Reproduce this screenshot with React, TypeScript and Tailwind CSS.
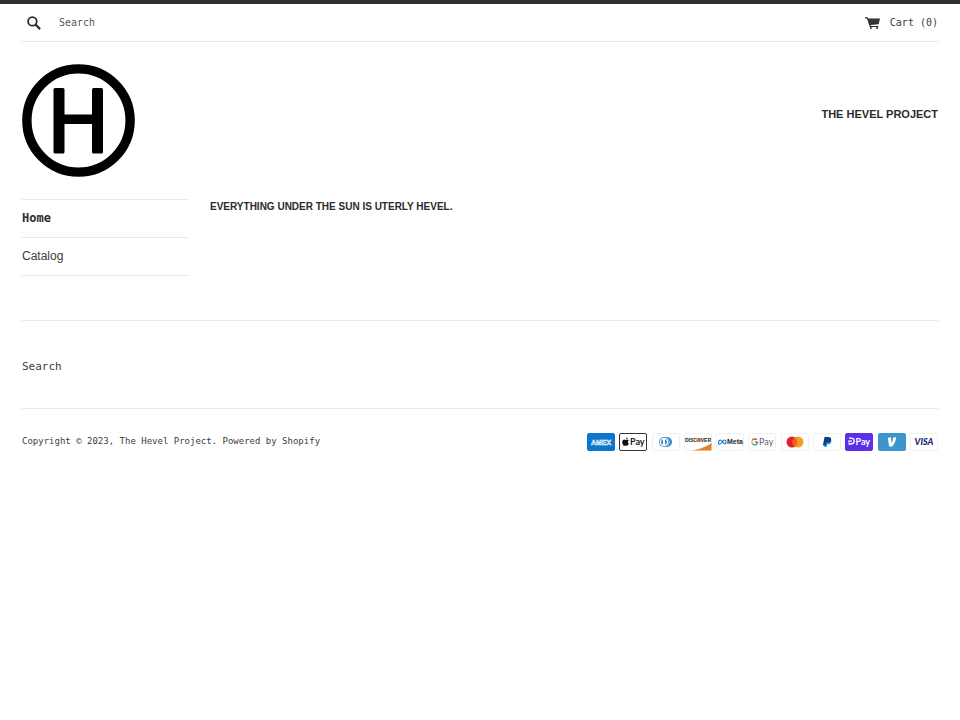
import type { ReactNode } from "react";

const PayCard = ({ name, fill = "#fff", stroke = "#f1f1f1", children }: { name: string; fill?: string; stroke?: string; children: ReactNode }) => (
    <li>
        <svg role="img" aria-label={name} viewBox="0 0 28 18" className="h-[18px] w-7">
            <rect x="0.5" y="0.5" width="27" height="17" rx="1.5" fill={fill} stroke={stroke} />
            {children}
        </svg>
    </li>
);

const payText = "font-['Liberation_Sans',sans-serif]";
const payTextRound = "font-[Lato,sans-serif]";

function PaymentIcons() {
    return (
        <ul className="flex w-[351px] justify-between" aria-label="Payment methods">
            <PayCard name="American Express" fill="#0b76cb" stroke="#0b76cb">
                <text x="14" y="11.5" textAnchor="middle" fontSize="7" fontWeight="bold" fill="#3f97dc" stroke="#fff" strokeWidth="0.5" className={payText}>AMEX</text>
            </PayCard>
            <PayCard name="Apple Pay" stroke="#333">
                <path d="M8.6 4.200c.1 1-.7 1.900-1.600 1.900-.1-.9.7-1.800 1.600-1.900zM9.700 10.700c-.4 1-1 2-1.700 2-.6 0-.8-.3-1.400-.3s-.9.300-1.400.300C4.200 12.700 3.200 10.700 3.200 9.200c0-1.800 1-2.700 2-2.700.7 0 1.100.4 1.600.4.500 0 1-.4 1.800-.4.500 0 1 .3 1.300.7-1.300.8-1.200 2.800-.2 3.500z" fill="#111" />
                <text x="11" y="12" fontSize="9" fontWeight="bold" fill="#222" className={payTextRound}>Pay</text>
            </PayCard>
            <PayCard name="Diners Club">
                <path d="M12.500 4H15a5 5 0 0 1 0 10h-2.500a5 5 0 0 0 0-10z" fill="#3086c8" />
                <path d="M12 4a5 5 0 0 0 0 10 5 5 0 0 0 0-10z" fill="#3086c8" />
                <circle cx="12" cy="9" r="4.300" fill="#fff" />
                <path d="M11 6.200v5.600a3 3 0 0 1 0-5.600zM13 6.200v5.600a3 3 0 0 0 0-5.600z" fill="#3086c8" />
            </PayCard>
            <PayCard name="Discover">
                <path d="M27.500 10v7.500H8c8-1.500 15-4 19.500-7.500z" fill="#e8802a" />
                <text x="14" y="9" textAnchor="middle" fontSize="5" fontWeight="bold" fill="#222" className={payText}>DISCOVER</text>
                <circle cx="14.500" cy="7.200" r="2" fill="#e8702a" />
            </PayCard>
            <PayCard name="Meta Pay">
                <path d="M2.500 10.500c0-2 .8-3.500 1.900-3.500 2 0 2.600 4 4.400 4 .9 0 1.200-.7 1.200-1.700C10 8 9.500 7 8.600 7 6.800 7 5.700 11.200 3.800 11.200c-.8 0-1.300-.3-1.300-.7z" fill="none" stroke="#1877cc" strokeWidth="1.100" />
                <text x="11" y="11.200" fontSize="7" fontWeight="bold" fill="#1c2b33" className={payText}>Meta</text>
            </PayCard>
            <PayCard name="Google Pay">
                <g fill="none" strokeWidth="1.400">
                    <path d="M8.900 6.900A2.900 2.900 0 0 0 4.300 7.500" stroke="#ea4335" />
                    <path d="M4.300 7.500a2.900 2.900 0 0 0 0 3" stroke="#fbbc04" />
                    <path d="M4.300 10.500a2.900 2.900 0 0 0 4.400.7" stroke="#34a853" />
                    <path d="M8.700 11.200A2.900 2.900 0 0 0 9.600 9.200H6.900" stroke="#4285f4" />
                </g>
                <text x="11" y="12" fontSize="9" fill="#5f6368" className={payTextRound}>Pay</text>
            </PayCard>
            <PayCard name="Mastercard">
                <circle cx="11" cy="9" r="5.500" fill="#e0202a" />
                <circle cx="17" cy="9" r="5.500" fill="#f59e1f" />
                <path d="M14 4.400a5.500 5.500 0 0 1 0 9.200 5.500 5.500 0 0 1 0-9.200z" fill="#f26122" />
            </PayCard>
            <PayCard name="PayPal">
                <path d="M12.500 6h4.500c1.300.6 1.700 1.800 1.200 3.200-.5 1.500-1.700 2-3.200 2h-.8l-.6 2.800h-2.500z" fill="#179bd7" />
                <path d="M11.500 4h4c2 0 3 1 2.600 2.900-.4 2-1.800 2.700-3.600 2.700h-1.200l-.6 3H9.900z" fill="#183b80" />
            </PayCard>
            <PayCard name="Shop Pay" fill="#5a31e8" stroke="#5a31e8">
                <path d="M3 8.200h4M4 5.200h2c2 0 3.200 1.200 3.200 2.900S8 11 6 11H4.200V9.500" fill="none" stroke="#fff" strokeWidth="1.300" />
                <text x="10.500" y="11.500" fontSize="9" fontWeight="bold" fill="#fff" className={payTextRound}>Pay</text>
            </PayCard>
            <PayCard name="Venmo" fill="#3d95ce" stroke="#3d95ce">
                <path d="M9.800 4.700l3-.4.800 5.600c.9-1.500 1.500-3.200 1.200-5.200l3-.6c.7 3-1.200 6.400-3.400 9.400h-3.300z" fill="#fff" />
            </PayCard>
            <PayCard name="Visa">
                <text x="14" y="12" textAnchor="middle" fontSize="9" fontWeight="900" fontStyle="italic" fill="#1a1f71" className={payTextRound}>VISA</text>
            </PayCard>
        </ul>
    );
}

export default function App() {
    return (
        <div className="min-h-screen border-t-4 border-[#2f2f2f] bg-white px-[22px] font-['DejaVu_Sans_Mono',monospace] text-[#3c3c3c]">
            <header>
                <div className="flex h-[38px] items-center justify-between border-b border-[#e8e8e8]">
                    <form className="flex items-center" role="search" onSubmit={(e) => e.preventDefault()}>
                        <button type="submit" aria-label="Search" className="flex h-8 w-[37px] items-center pl-[5px]">
                            <svg viewBox="0 0 14 14" className="size-[14px]" fill="none" stroke="#2b2b2b">
                                <circle cx="5.400" cy="5.400" r="4.300" strokeWidth="1.800" />
                                <path d="M8.500 8.500l4.600 4.600" strokeWidth="2.200" />
                            </svg>
                        </button>
                        <input
                            type="search"
                            aria-label="Search our store"
                            placeholder="Search"
                            className="w-40 pb-px text-[10px] outline-none placeholder:text-[#555]"
                        />
                    </form>
                    <a href="#cart" className="flex items-center gap-[10px] text-[10px]">
                        <svg viewBox="0 0 15 12" className="h-3 w-[15px]" fill="#2b2b2b">
                            <path d="M0 .3h2.700l.5 1.200H15l-1.300 5.700-8.300.9.300.8h7.700v1.100H4.800L2 1.400H0z" />
                            <path d="M4.200 3.300h10M4.900 5.200h9" stroke="#777" strokeWidth="0.300" />
                            <circle cx="5.900" cy="11" r="1" />
                            <circle cx="12" cy="11" r="1" />
                        </svg>
                        Cart (0)
                    </a>
                </div>
                <div className="flex items-center justify-between pt-[22px]">
                    <a href="#home" aria-label="The Hevel Project">
                        <svg viewBox="0 0 113 113" className="size-[113px]">
                            <circle cx="56.500" cy="56.500" r="51.600" fill="none" stroke="#000" strokeWidth="9.400" />
                            <g fill="#000">
                                <rect x="31.500" y="24" width="11" height="65.500" rx="1.500" />
                                <rect x="70" y="24" width="11" height="65.500" rx="1.500" />
                                <rect x="40" y="50.500" width="32" height="9.500" />
                            </g>
                        </svg>
                    </a>
                    <p className="pb-3 font-['Liberation_Sans',sans-serif] text-[11px] font-bold text-[#2b2b2b]">THE HEVEL PROJECT</p>
                </div>
            </header>

            <div className="flex gap-[22px] pt-[22px]">
                <nav className="w-[166px] shrink-0">
                    <ul className="border-t border-[#e8e8e8] text-xs leading-[17px]">
                        <li className="border-b border-[#e8e8e8]">
                            <a href="#home" className="block py-[10px] font-bold text-[#2b2b2b]">Home</a>
                        </li>
                        <li className="border-b border-[#e8e8e8] font-['Liberation_Sans',sans-serif]">
                            <a href="#catalog" className="block py-[10px]">Catalog</a>
                        </li>
                    </ul>
                </nav>
                <main className="min-w-0 flex-1">
                    <h1 className="font-['Liberation_Sans',sans-serif] text-[10px] leading-4 font-bold text-[#2b2b2b]">
                        EVERYTHING UNDER THE SUN IS UTERLY HEVEL.
                    </h1>
                </main>
            </div>

            <footer className="mt-11 border-t border-[#e8e8e8]">
                <div className="pt-[38px] pb-[33px] text-[11px] leading-4">
                    <a href="#search">Search</a>
                </div>
                <div className="flex items-center justify-between border-t border-[#e8e8e8] pt-6">
                    <p className="text-[9px]">
                        Copyright © 2023, <a href="#home">The Hevel Project</a>. <a href="#shopify">Powered by Shopify</a>
                    </p>
                    <PaymentIcons />
                </div>
            </footer>
        </div>
    );
}
